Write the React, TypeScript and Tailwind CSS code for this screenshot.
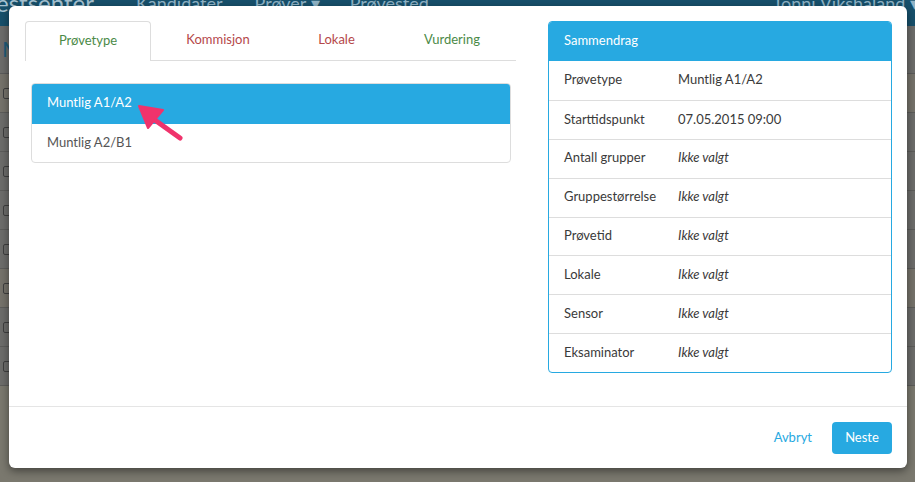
import React from 'react';

const tabs = [
  { label: 'Prøvetype', w: 'w-[126px]', color: 'text-[#4b8a47]', active: true },
  { label: 'Kommisjon', w: 'w-[134px]', color: 'text-[#b5484a]', active: false },
  { label: 'Lokale', w: 'w-[103px]', color: 'text-[#b5484a]', active: false },
  { label: 'Vurdering', w: 'w-[128px]', color: 'text-[#4b8a47]', active: false },
];

const summary = [
  { label: 'Prøvetype', value: 'Muntlig A1/A2', empty: false },
  { label: 'Starttidspunkt', value: '07.05.2015 09:00', empty: false },
  { label: 'Antall grupper', value: 'Ikke valgt', empty: true },
  { label: 'Gruppestørrelse', value: 'Ikke valgt', empty: true },
  { label: 'Prøvetid', value: 'Ikke valgt', empty: true },
  { label: 'Lokale', value: 'Ikke valgt', empty: true },
  { label: 'Sensor', value: 'Ikke valgt', empty: true },
  { label: 'Eksaminator', value: 'Ikke valgt', empty: true },
];

function Backdrop() {
  return (
    <div className="absolute inset-0 flex flex-col bg-[#6c6c6a]">
      <div className="h-[26px] bg-[#17506b] flex items-start text-[#8fb3c6] text-[18px] leading-[6px] whitespace-nowrap overflow-hidden">
        <span className="ml-[-4px] text-[24px] leading-[6px] text-[#a6c2d1]">estsenter</span>
        <span className="ml-[42px]">Kandidater</span>
        <span className="ml-[32px]">Prøver ▾</span>
        <span className="ml-[30px]">Prøvested</span>
        <span className="ml-auto mr-[-4px]">Tonni Vikshaland ▾</span>
      </div>
      <div className="h-[48px] border-b border-[#5a5a5a] text-[#1f5b78] text-[22px] pl-[2px] pt-[6px]">Mu</div>
      {Array.from({ length: 8 }).map((_, i) => (
        <div
          key={i}
          className={`h-[39px] border-b border-[#5c5c5a] flex items-center pl-[3px] ${i === 0 || i === 5 ? 'bg-[#75726a]' : ''}`}
        >
          <div className="w-[10px] h-[11px] rounded-[2px] border border-[#3f3f3f]" />
        </div>
      ))}
      <div className="flex-1 bg-[#7a786e]" />
    </div>
  );
}

export default function App() {
  return (
    <div className="relative w-[915px] h-[482px] overflow-hidden font-['Lato','Liberation_Sans',sans-serif] text-[13px]">
      <Backdrop />
      <div className="absolute left-[9px] top-[6px] w-[898px] h-[462px] bg-white rounded-[6px] shadow-[0_3px_8px_rgba(0,0,0,0.45)] flex flex-col">
        <div className="flex pl-[16px] pt-[15px] h-[400px]">
          <div className="w-[491px]">
            <div className="flex h-[40px]">
              {tabs.map((t) =>
                t.active ? (
                  <div
                    key={t.label}
                    className={`${t.w} ${t.color} flex items-center justify-center pb-[2px] border border-b-0 border-[#dddddd] rounded-t-[4px] bg-white`}
                  >
                    {t.label}
                  </div>
                ) : (
                  <div
                    key={t.label}
                    className={`${t.w} ${t.color} flex items-center justify-center pb-[2px] border-b border-[#dddddd]`}
                  >
                    {t.label}
                  </div>
                )
              )}
            </div>
            <div className="ml-[6px] mt-[22px] w-[480px] border border-[#dddddd] rounded-[4px] overflow-hidden">
              <div className="h-[40px] bg-[#27a9e1] text-white flex items-center pl-[15px] pb-[2px]">Muntlig A1/A2</div>
              <div className="h-[38px] text-[#555555] flex items-center pl-[15px]">Muntlig A2/B1</div>
            </div>
          </div>
          <div className="ml-[32px] w-[344px] h-[352px] border border-[#27a9e1] rounded-[4px] overflow-hidden flex flex-col">
            <div className="h-[39px] bg-[#27a9e1] text-white flex items-center pl-[15px] pb-[2px] shrink-0">Sammendrag</div>
            {summary.map((r, i) => (
              <div
                key={r.label}
                className={`h-[39px] flex items-center pl-[15px] pb-[1px] text-[#3a3a3a] ${i > 0 ? 'border-t border-[#dddddd]' : ''}`}
              >
                <span className="w-[114px]">{r.label}</span>
                <span className={r.empty ? 'italic' : ''}>{r.value}</span>
              </div>
            ))}
          </div>
        </div>
        <div className="flex-1 border-t border-[#e5e5e5] flex items-center justify-end pr-[15px]">
          <span className="text-[#27a9e1] mr-[20px]">Avbryt</span>
          <button className="w-[60px] h-[32px] bg-[#27a9e1] text-white rounded-[4px]">Neste</button>
        </div>
        <svg className="absolute left-0 top-0 pointer-events-none" width="898" height="462">
          <line x1="143" y1="112" x2="171" y2="132" stroke="#f0336c" strokeWidth="5" strokeLinecap="round" />
          <polygon points="130,100 154,104 139,122" fill="#f0336c" stroke="#f0336c" strokeWidth="2" strokeLinejoin="round" />
        </svg>
      </div>
    </div>
  );
}
